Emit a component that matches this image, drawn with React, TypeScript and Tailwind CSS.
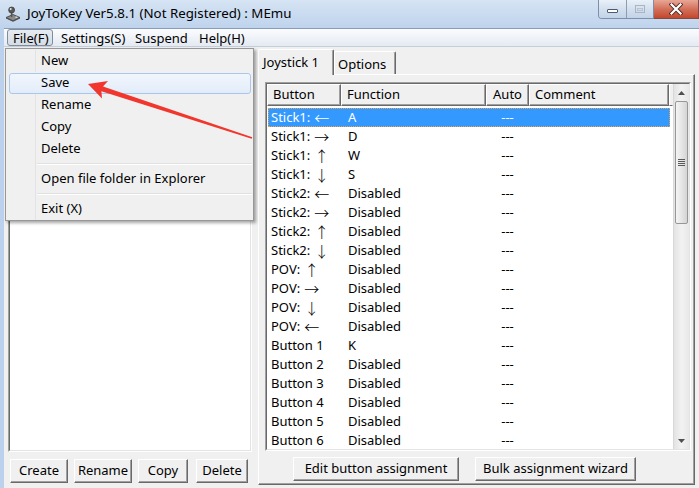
import React from 'react';

type Row = { btn: string; arrow?: string; fn: string };

const rows: Row[] = [
  { btn: 'Stick1:', arrow: '←', fn: 'A' },
  { btn: 'Stick1:', arrow: '→', fn: 'D' },
  { btn: 'Stick1:', arrow: '↑', fn: 'W' },
  { btn: 'Stick1:', arrow: '↓', fn: 'S' },
  { btn: 'Stick2:', arrow: '←', fn: 'Disabled' },
  { btn: 'Stick2:', arrow: '→', fn: 'Disabled' },
  { btn: 'Stick2:', arrow: '↑', fn: 'Disabled' },
  { btn: 'Stick2:', arrow: '↓', fn: 'Disabled' },
  { btn: 'POV:', arrow: '↑', fn: 'Disabled' },
  { btn: 'POV:', arrow: '→', fn: 'Disabled' },
  { btn: 'POV:', arrow: '↓', fn: 'Disabled' },
  { btn: 'POV:', arrow: '←', fn: 'Disabled' },
  { btn: 'Button 1', fn: 'K' },
  { btn: 'Button 2', fn: 'Disabled' },
  { btn: 'Button 3', fn: 'Disabled' },
  { btn: 'Button 4', fn: 'Disabled' },
  { btn: 'Button 5', fn: 'Disabled' },
  { btn: 'Button 6', fn: 'Disabled' },
];

function AppIcon() {
  return (
    <svg width="16" height="16" viewBox="0 0 16 16">
      <path d="M1 11.5 L8 8.5 L15 11.5 L8 14.8 Z" fill="#8a8a8a" stroke="#3c3c3c" strokeWidth="0.8" />
      <path d="M1 11.5 L1 12.6 L8 15.8 L15 12.6 L15 11.5 L8 14.8 Z" fill="#4a4a4a" />
      <rect x="5.8" y="4.5" width="1.6" height="6.5" fill="#555" />
      <circle cx="6.6" cy="4" r="3" fill="#5a5a5a" stroke="#2a2a2a" strokeWidth="0.6" />
      <circle cx="5.7" cy="3.1" r="1" fill="#e8e8e8" />
      <ellipse cx="11.4" cy="11.2" rx="1.3" ry="0.7" fill="#d8d8d8" />
    </svg>
  );
}

function CaptionButtons() {
  return (
    <div className="flex self-start">
      <div className="flex h-[19px] rounded-bl-[4px] border border-t-0 border-[#7d8ea7] overflow-hidden">
        <div className="w-[28px] h-full bg-gradient-to-b from-[#e9f0f8] via-[#d4e0ee] to-[#c2d3e8] border-r border-[#8b9cb4] flex items-center justify-center">
          <div className="w-[11px] h-[4px] mt-[3px] bg-white border border-[#4b5a70] rounded-[1px]" />
        </div>
        <div className="w-[26px] h-full bg-gradient-to-b from-[#e9f0f8] via-[#d4e0ee] to-[#c2d3e8] flex items-center justify-center">
          <div className="w-[10px] h-[8px] border border-[#a9b4c2] flex items-center justify-center">
            <div className="w-[6px] h-[3px] border border-[#b9c2ce]" />
          </div>
        </div>
      </div>
      <div className="w-[45px] h-[19px] border border-t-0 border-l-0 border-[#7d4d45] bg-gradient-to-b from-[#e8a696] via-[#d3705a] to-[#c4462a] flex items-center justify-center">
        <svg width="14" height="12" viewBox="0 0 14 12">
          <path d="M2.5 1.5 L11.5 10.5 M11.5 1.5 L2.5 10.5" stroke="#4a2a26" strokeWidth="4" strokeLinecap="square" />
          <path d="M2.5 1.5 L11.5 10.5 M11.5 1.5 L2.5 10.5" stroke="#ffffff" strokeWidth="2.2" strokeLinecap="square" />
        </svg>
      </div>
    </div>
  );
}

function TitleBar() {
  return (
    <div className="h-[28px] flex justify-between bg-gradient-to-b from-[#d6e4f4] to-[#bed3ec]">
      <div className="flex items-center pl-[5px] pb-[1px]">
        <AppIcon />
        <span className="ml-[6px] text-[13.3px] text-black">JoyToKey Ver5.8.1 (Not Registered) : MEmu</span>
      </div>
      <CaptionButtons />
    </div>
  );
}

function MenuBar() {
  return (
    <div className="h-[18px] flex items-stretch bg-gradient-to-b from-[#fbfcfe] to-[#e4eaf3] border-b border-[#c5cfdc] text-[13px] leading-[16px]">
      <div className="ml-[3px] w-[46px] pl-[5px] flex items-center border border-[#7f8c9c] rounded-[3px] bg-gradient-to-b from-[#e6ebf1] to-[#d6dde6]">File(F)</div>
      <div className="w-[75px] pl-[7px] flex items-center border border-transparent">Settings(S)</div>
      <div className="w-[64px] pl-[6px] flex items-center border border-transparent">Suspend</div>
      <div className="w-[60px] pl-[6px] flex items-center border border-transparent">Help(H)</div>
    </div>
  );
}

function ClassicButton({ label, w }: { label: string; w: string }) {
  return (
    <div className={`${w} h-[24px] bg-[#f0f0f0] border border-t-white border-l-white border-r-[#696969] border-b-[#696969] flex items-center justify-center text-[13px] shadow-[inset_-1px_-1px_0_#a0a0a0]`}>
      {label}
    </div>
  );
}

function LeftPane() {
  return (
    <div className="w-[252px] pl-[4px] pt-[1px] flex flex-col">
      <div className="w-[244px] h-[404px] bg-white border border-t-[#a0a0a0] border-l-[#a0a0a0] border-r-white border-b-white">
        <div className="w-full h-full border border-t-[#696969] border-l-[#696969] border-r-[#e3e3e3] border-b-[#e3e3e3]" />
      </div>
      <div className="flex mt-[7px] ml-[2px]">
        <ClassicButton label="Create" w="w-[58px]" />
        <div className="w-[6px]" />
        <ClassicButton label="Rename" w="w-[58px]" />
        <div className="w-[6px]" />
        <ClassicButton label="Copy" w="w-[50px]" />
        <div className="w-[8px]" />
        <ClassicButton label="Delete" w="w-[52px]" />
      </div>
    </div>
  );
}

function Arrow({ ch }: { ch: string }) {
  return (
    <span className="font-['Noto_Sans_CJK_SC',sans-serif] text-[15px] leading-[19px] font-light ml-[4px]">
      {ch}
    </span>
  );
}

function Scrollbar() {
  return (
    <div className="w-[16px] h-full flex flex-col bg-gradient-to-r from-[#e3e3e3] via-[#f2f2f2] to-[#e8e8e8] border-l border-[#d8d8d8]">
      <div className="h-[17px] flex items-center justify-center">
        <svg width="7" height="4" viewBox="0 0 7 4"><path d="M0 4 L3.5 0 L7 4 Z" fill="#505050" /></svg>
      </div>
      <div className="mx-[1px] h-[123px] rounded-[2px] border border-[#979797] bg-gradient-to-r from-[#f4f4f4] via-[#e6e6e6] to-[#d4d4d4] flex flex-col items-center justify-center gap-[1px]">
        <div className="w-[7px] h-[1px] bg-[#5a5a5a]" />
        <div className="w-[7px] h-[1px] bg-[#5a5a5a]" />
        <div className="w-[7px] h-[1px] bg-[#5a5a5a]" />
        <div className="w-[7px] h-[1px] bg-[#5a5a5a]" />
      </div>
      <div className="flex-1" />
      <div className="h-[17px] flex items-center justify-center">
        <svg width="7" height="4" viewBox="0 0 7 4"><path d="M0 0 L3.5 4 L7 0 Z" fill="#505050" /></svg>
      </div>
    </div>
  );
}

function HeaderCell({ label, w, center }: { label: string; w: string; center?: boolean }) {
  return (
    <div className={`${w} h-full bg-[#f0f0f0] border border-t-white border-l-white border-r-[#696969] border-b-[#696969] shadow-[inset_-1px_-1px_0_#a0a0a0] flex items-center ${center ? 'justify-center' : 'pl-[5px]'}`}>
      {label}
    </div>
  );
}

function ListView() {
  return (
    <div className="w-[426px] h-[369px] border border-t-[#a0a0a0] border-l-[#a0a0a0] border-r-white border-b-white">
      <div className="w-full h-full bg-white border border-t-[#696969] border-l-[#696969] border-r-[#e3e3e3] border-b-[#e3e3e3] flex">
        <div className="flex-1 flex flex-col overflow-hidden">
          <div className="h-[22px] flex shrink-0">
            <HeaderCell label="Button" w="w-[74px]" />
            <HeaderCell label="Function" w="w-[145px]" />
            <HeaderCell label="Auto" w="w-[43px]" center />
            <HeaderCell label="Comment" w="w-[140px]" />
            <div className="flex-1 h-full bg-[#f0f0f0] border border-t-white border-l-white border-b-[#696969] border-r-[#f0f0f0]" />
          </div>
          <div className="pt-[2px] pl-[1px]">
            {rows.map((r, i) => (
              <div
                key={i}
                className={`w-[402px] h-[19px] grid grid-cols-[73px_145px_43px_141px] items-center leading-[19px] text-[13px] ${
                  i === 0 ? 'bg-[#3399ff] text-white outline-1 outline-dotted outline-[#e8a04c] -outline-offset-1' : 'text-black'
                }`}
              >
                <div className="pl-[3px] whitespace-nowrap h-[19px] flex items-center">
                  <span>{r.btn}</span>
                  {r.arrow && <Arrow ch={r.arrow} />}
                </div>
                <div className="pl-[7px]">{r.fn}</div>
                <div className="text-center">---</div>
                <div />
              </div>
            ))}
          </div>
        </div>
        <Scrollbar />
      </div>
    </div>
  );
}

function RightPane() {
  return (
    <div className="flex-1 pl-[2px] pt-[2px] flex flex-col">
      <div className="flex items-end h-[25px]">
        <div className="relative z-10 w-[76px] h-[26px] -mb-px bg-[#f0f0f0] border border-b-0 border-t-white border-l-white border-r-[#696969] rounded-t-[2px] shadow-[inset_-1px_0_0_#a0a0a0] pl-[4px] pt-[2px] text-[13px] leading-[20px]">
          Joystick 1
        </div>
        <div className="w-[62px] h-[23px] bg-[#f0f0f0] border border-b-0 border-t-white border-l-white border-r-[#696969] rounded-t-[2px] shadow-[inset_-1px_0_0_#a0a0a0] pl-[3px] pt-[2px] text-[13px] leading-[20px]">
          Options
        </div>
      </div>
      <div className="w-[437px] h-[411px] bg-[#f0f0f0] border border-t-white border-l-white border-r-[#696969] border-b-[#696969] shadow-[inset_-1px_-1px_0_#a0a0a0] pl-[6px] pt-[7px] flex flex-col">
        <ListView />
        <div className="flex mt-[6px] ml-[28px] gap-[16px]">
          <ClassicButton label="Edit button assignment" w="w-[166px]" />
          <ClassicButton label="Bulk assignment wizard" w="w-[161px]" />
        </div>
      </div>
    </div>
  );
}

function MenuItem({ label, active }: { label: string; active?: boolean }) {
  if (active) {
    return (
      <div className="h-[22px] flex items-center pl-[3px] pr-[2px]">
        <div className="w-full h-[21px] rounded-[3px] border border-[#a8c8ee] bg-gradient-to-b from-[#f1f6fd] to-[#e2ecf9] flex items-center pl-[31px]">
          {label}
        </div>
      </div>
    );
  }
  return (
    <div className="h-[22px] flex items-stretch">
      <div className="w-[30px] shrink-0 border-r border-r-[#e2e3e3]" />
      <div className="flex items-center pl-[5px]">{label}</div>
    </div>
  );
}

function MenuSeparator({ h }: { h: string }) {
  return (
    <div className={`${h} flex items-stretch`}>
      <div className="w-[30px] shrink-0 border-r border-r-[#e2e3e3]" />
      <div className="flex-1 flex items-center pl-[1px] pr-[1px]">
        <div className="w-full h-[2px] border-t border-t-[#e0e0e0] border-b border-b-white" />
      </div>
    </div>
  );
}

function FileMenu() {
  return (
    <div className="absolute left-[5px] top-[48px] w-[249px] h-[173px] bg-[#f0f0f0] border border-[#979797] shadow-[2px_2px_3px_rgba(0,0,0,0.35)] pt-[1px] text-[13px] z-20">
      <MenuItem label="New" />
      <MenuItem label="Save" active />
      <MenuItem label="Rename" />
      <MenuItem label="Copy" />
      <MenuItem label="Delete" />
      <MenuSeparator h="h-[8px]" />
      <MenuItem label="Open file folder in Explorer" />
      <MenuSeparator h="h-[8px]" />
      <MenuItem label="Exit (X)" />
    </div>
  );
}

function RedArrow() {
  return (
    <svg className="absolute left-0 top-0 z-30 pointer-events-none" width="699" height="488" viewBox="0 0 699 488">
      <polygon
        points="88,84 108,81 103,86.5 252.3,137.2 251.7,138.8 101.4,91.3 102,98.4"
        fill="#f1372d"
      />
    </svg>
  );
}

export default function App() {
  return (
    <div className="relative w-[699px] h-[488px] overflow-hidden bg-[#bcd2ec] font-['Noto_Sans','Open_Sans',sans-serif] text-[13px] text-black flex flex-col">
      <TitleBar />
      <div className="flex-1 min-h-0 flex flex-col ml-[4px] border-t border-[#8a9db6]">
        <MenuBar />
        <div className="flex-1 min-h-0 flex bg-[#f0f0f0]">
          <LeftPane />
          <RightPane />
        </div>
      </div>
      <FileMenu />
      <RedArrow />
    </div>
  );
}
